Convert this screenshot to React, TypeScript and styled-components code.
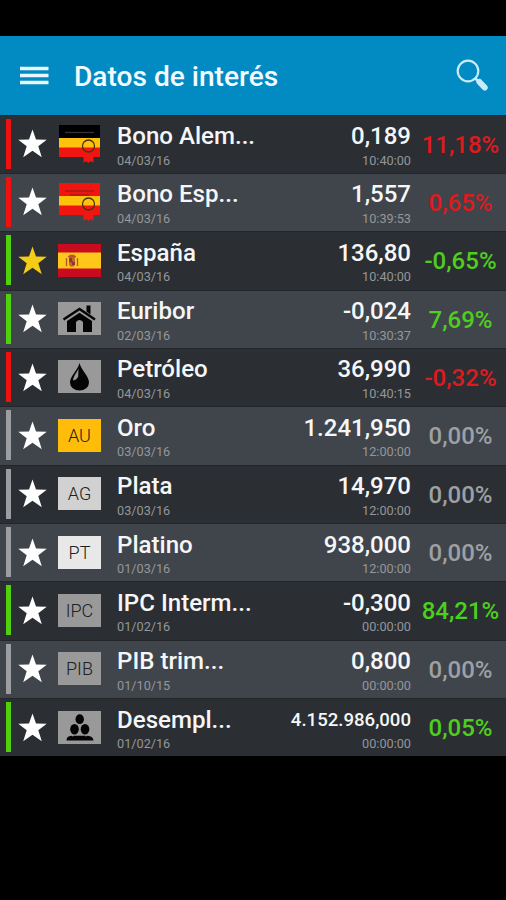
import React from 'react';
import styled, { createGlobalStyle } from 'styled-components';

const GlobalStyle = createGlobalStyle`
  * { box-sizing: border-box; }
  body { margin: 0; background: #000; font-family: Roboto, "Noto Sans", sans-serif; }
`;

type Trend = 'up' | 'down' | 'flat';

const barColor: Record<Trend, string> = { up: '#4fd20d', down: '#ef1010', flat: '#9b9da0' };
const textColor: Record<Trend, string> = { up: '#4ece1d', down: '#dc1b20', flat: '#9da0a4' };

const Screen = styled.div`
  width: 506px;
  height: 900px;
  padding-top: 36px;
  background: #000;
  overflow: hidden;
`;

const AppBar = styled.header`
  display: flex;
  align-items: center;
  height: 78.5px;
  padding: 2px 17px 0 19px;
  background: #028bc2;
`;

const MenuButton = styled.button`
  display: flex;
  padding: 0;
  border: 0;
  background: none;
`;

const Title = styled.h1`
  flex: 1;
  margin: 2px 0 0 25px;
  color: #f4faff;
  font-size: 28.1px;
  font-weight: 500;
  line-height: 32px;
  white-space: nowrap;
`;

const List = styled.ul`
  display: grid;
  grid-auto-rows: 58.36px;
  margin: 0;
  padding: 0;
  list-style: none;
`;

const Row = styled.li`
  display: flex;
  align-items: flex-start;
  padding: 3px 0 0 6px;
  background: #2b2f33;
  border-top: 1px solid #23272a;
  &:nth-child(even) { background: #40454b; }
`;

const TrendBar = styled.span<{ $trend: Trend }>`
  width: 5px;
  height: 50px;
  background: ${(p) => barColor[p.$trend]};
`;

const StarIcon = styled.svg`
  width: 29px;
  height: 29px;
  margin: 10.6px 0 0 7px;
`;

const Badge = styled.span<{ $bg: string }>`
  display: flex;
  align-items: center;
  justify-content: center;
  width: 43px;
  height: 33px;
  margin: 8.500px 0 0 11px;
  background: ${(p) => p.$bg};
  color: #202020;
  font-size: 18px;
  font-weight: 300;
  line-height: 33px;
  svg { overflow: visible; flex: none; }
`;

const BondIcon = styled.svg`
  margin-top: -5px;
`;

const Names = styled.div`
  flex: 1;
  margin: 1.5px 0 0 16px;
`;

const Name = styled.div`
  height: 33px;
  color: #f5f6f8;
  font-size: 24.1px;
  font-weight: 500;
  line-height: 33px;
  white-space: nowrap;
`;

const Quote = styled.div`
  margin-top: 1.5px;
  text-align: right;
`;

const Value = styled(Name)<{ $small?: boolean }>`
  font-size: ${(p) => (p.$small ? 18.6 : 24)}px;
`;

const Stamp = styled.div`
  height: 15px;
  margin-top: -0.5px;
  color: #94979b;
  font-size: 12.7px;
  line-height: 16px;
`;

const Percent = styled.div<{ $trend: Trend }>`
  width: 95px;
  padding: 11px 0 0 4px;
  color: ${(p) => textColor[p.$trend]};
  font-size: 24px;
  font-weight: 500;
  line-height: 30px;
  text-align: center;
  white-space: nowrap;
`;

const Ribbon = () => (
  <g>
    <path d="M25.500 24h10v13.500l-2.500-1.300-2.500 1.500-2.500-1.500-2.500 1.300z" fill="#ef1712" />
    <circle cx="30.500" cy="21" r="6" fill="none" stroke="#493315" strokeWidth="1.300" />
  </g>
);

const Bond = ({ top }: { top: string }) => (
  <BondIcon width="43" height="33" viewBox="0 0 43 33">
    <path fill={top} d="M1 0h41v14H1z" />
    <path fill="#ffc20c" d="M1 13h41v10H1z" />
    <path fill="#f01510" d="M1 22.500h41v9.500H1z" />
    {top === '#000' ? (
      <path d="M7 7.500h29" stroke="#343434" strokeWidth="1.300" />
    ) : (
      <path d="M7 8h29M12 12h19" stroke="#a51a18" strokeWidth="1.300" />
    )}
    <Ribbon />
  </BondIcon>
);

const SpainFlag = () => (
  <svg width="43" height="33" viewBox="0 0 43 33">
    <path fill="#c90b20" d="M0 0h43v33H0z" />
    <path fill="#ffc719" d="M0 8.500h43v16H0z" />
    <path fill="#c16b22" d="M11 13h6v8q-3 4-6 0z" />
    <path d="M8.500 14v8M19.500 14v8M10 12.500h8M11.500 11.500h5" stroke="#a95829" strokeWidth="1.300" />
    <path fill="#a62a25" d="M11 14h3v4h-3zM14 18h3v3h-3z" />
    <circle cx="14" cy="18" r="1.200" fill="#6b4c77" />
  </svg>
);

const House = () => (
  <svg width="43" height="33" viewBox="0 0 43 33">
    <path d="M5.500 17.500 21.500 7l15.500 10.500" fill="none" stroke="#050505" strokeWidth="2.500" />
    <path d="M28.500 3.500h4v9l-4-3z" fill="#050505" />
    <path d="M9 19 21.500 10.800 34 19V30h-9V20q-3.500-4-7 0v10H9z" fill="#050505" />
  </svg>
);

const Drop = () => (
  <svg width="43" height="33" viewBox="0 0 43 33">
    <path d="M21.500 3C20 10 12 16 12 22.500a9.500 8 0 0 0 19 0C31 16 23 10 21.500 3z" fill="#050505" />
    <path d="M20.500 8.500C18.500 13 15 16.500 15.200 20.500q3.500-.5 5-4z" fill="#999" />
  </svg>
);

const People = () => (
  <svg width="43" height="33" viewBox="0 0 43 33" fill="#050505">
    <ellipse cx="21.700" cy="8.200" rx="4.200" ry="4.900" />
    <ellipse cx="16.500" cy="18.200" rx="4.300" ry="5.200" />
    <ellipse cx="27" cy="18.200" rx="4.300" ry="5.200" />
    <path d="M8.500 29.500q0-4.500 5-4.800l1 .8 1.500-.8h11l1 .8 1.500-.8q5.500.3 6 4.800z" />
  </svg>
);

const Star = ({ gold }: { gold?: boolean }) => (
  <StarIcon viewBox="0 0 29 29">
    <path
      d="M14.500.5 18 10.500 28.700 10.700 20.300 17.200 23.800 28.200 14.500 21.800 5.200 28.200 8.700 17.200.3 10.700 11 10.500z"
      fill={gold ? '#f5cc16' : '#fff'}
    />
  </StarIcon>
);

interface Indicator {
  name: string;
  date: string;
  value: string;
  time: string;
  percent: string;
  bar: Trend;
  badge: React.ReactNode;
  bg?: string;
  gold?: boolean;
  small?: boolean;
}

const indicators: Indicator[] = [
  { name: 'Bono Alem...', date: '04/03/16', value: '0,189', time: '10:40:00', percent: '11,18%', bar: 'down', badge: <Bond top="#000" /> },
  { name: 'Bono Esp...', date: '04/03/16', value: '1,557', time: '10:39:53', percent: '0,65%', bar: 'down', badge: <Bond top="#f01510" /> },
  { name: 'España', date: '04/03/16', value: '136,80', time: '10:40:00', percent: '-0,65%', bar: 'up', badge: <SpainFlag />, gold: true },
  { name: 'Euribor', date: '02/03/16', value: '-0,024', time: '10:30:37', percent: '7,69%', bar: 'up', badge: <House />, bg: '#999' },
  { name: 'Petróleo', date: '04/03/16', value: '36,990', time: '10:40:15', percent: '-0,32%', bar: 'down', badge: <Drop />, bg: '#999' },
  { name: 'Oro', date: '03/03/16', value: '1.241,950', time: '12:00:00', percent: '0,00%', bar: 'flat', badge: 'AU', bg: '#ffbd0a' },
  { name: 'Plata', date: '03/03/16', value: '14,970', time: '12:00:00', percent: '0,00%', bar: 'flat', badge: 'AG', bg: '#d1d1d1' },
  { name: 'Platino', date: '01/03/16', value: '938,000', time: '12:00:00', percent: '0,00%', bar: 'flat', badge: 'PT', bg: '#e8e8e8' },
  { name: 'IPC Interm...', date: '01/02/16', value: '-0,300', time: '00:00:00', percent: '84,21%', bar: 'up', badge: 'IPC', bg: '#999' },
  { name: 'PIB trim...', date: '01/10/15', value: '0,800', time: '00:00:00', percent: '0,00%', bar: 'flat', badge: 'PIB', bg: '#999' },
  { name: 'Desempl...', date: '01/02/16', value: '4.152.986,000', time: '00:00:00', percent: '0,05%', bar: 'up', badge: <People />, bg: '#999', small: true },
];

export default function App() {
  return (
    <Screen>
      <GlobalStyle />
      <AppBar>
        <MenuButton aria-label="Menú">
          <svg width="30" height="20" viewBox="0 0 30 20">
            <path d="M1 2.500h28.500M1 9.500h28.500M1 16.500h28.500" stroke="#eaf5fc" strokeWidth="3.500" />
          </svg>
        </MenuButton>
        <Title>Datos de interés</Title>
        <MenuButton aria-label="Buscar">
          <svg width="33" height="34" viewBox="0 0 33 34" fill="none">
            <circle cx="12" cy="12" r="10.300" stroke="#c9eaf8" strokeWidth="2.200" />
            <path d="m19 19 4 4" stroke="#c9eaf8" strokeWidth="2.500" />
            <path d="m23.500 23 5.200 5.500" stroke="#c9eaf8" strokeWidth="6" strokeLinecap="round" />
          </svg>
        </MenuButton>
      </AppBar>
      <List>
        {indicators.map((it) => (
          <Row key={it.name}>
            <TrendBar $trend={it.bar} />
            <Star gold={it.gold} />
            <Badge $bg={it.bg ?? 'transparent'}>{it.badge}</Badge>
            <Names>
              <Name>{it.name}</Name>
              <Stamp>{it.date}</Stamp>
            </Names>
            <Quote>
              <Value $small={it.small}>{it.value}</Value>
              <Stamp>{it.time}</Stamp>
            </Quote>
            <Percent $trend={it.bar}>{it.percent}</Percent>
          </Row>
        ))}
      </List>
    </Screen>
  );
}
